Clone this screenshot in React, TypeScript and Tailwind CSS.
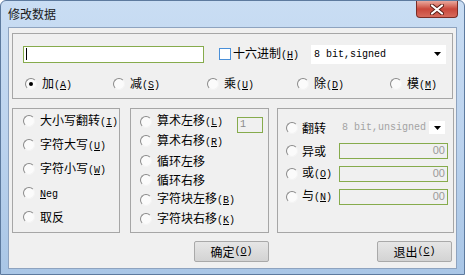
import React from "react"

const cjk = "font-['Noto_Sans_CJK_SC','Liberation_Sans',sans-serif]"
const mono = "font-['Liberation_Mono',monospace]"

// mnemonic like (A) with the letter underlined
function Key({ k }: { k: string }) {
  return (
    <span className={`${mono} text-[10px]`}>
      (<span className="underline underline-offset-[1px]">{k}</span>)
    </span>
  )
}

function Radio({ checked }: { checked?: boolean }) {
  return (
    <span className="flex h-[12px] w-[12px] shrink-0 items-center justify-center rounded-full border border-t-[#8a8a8a] border-l-[#8a8a8a] border-r-[#f4f4f4] border-b-[#f4f4f4] bg-[#fbfbfb]">
      {checked && <span className="h-[4px] w-[4px] rounded-full bg-black" />}
    </span>
  )
}

function Option({ label, k, checked, className = "" }: { label: React.ReactNode; k?: string; checked?: boolean; className?: string }) {
  return (
    <div className={`flex items-center gap-[5px] ${className}`}>
      <Radio checked={checked} />
      <span className="whitespace-nowrap text-[12px] leading-[14px] text-black">
        {label}
        {k && <Key k={k} />}
      </span>
    </div>
  )
}

function Field({ value }: { value: string }) {
  return (
    <div className="flex h-[16px] w-[109px] items-center justify-end border border-[#86ab4c] bg-[#f0f0f0] pr-[2px] font-['Liberation_Sans',sans-serif] text-[11px] text-[#9a9a9a]">
      {value}
    </div>
  )
}

function Button({ children }: { children: React.ReactNode }) {
  return (
    <button className="flex h-[21px] w-[75px] items-center justify-center rounded-[2px] border border-[#a9a9a9] bg-gradient-to-b from-[#e6e6e6] to-[#d3d3d3] text-[12px] leading-[14px] text-black">
      {children}
    </button>
  )
}

export default function App() {
  return (
    <div className={`${cjk} flex h-[275px] w-[465px] flex-col overflow-hidden rounded-t-[6px] border border-[#5d7a9e] bg-gradient-to-b from-[#c9ddf3] via-[#bcd3ee] to-[#a9c6e6]`}>
      {/* Title bar */}
      <div className="flex h-[26px] shrink-0 items-start justify-between">
        <span className="pl-[7px] pt-[7px] text-[12px] leading-[12px] text-[#1a1a1a]">修改数据</span>
        <div className="mr-[6px] flex h-[17px] w-[42px] items-center justify-center rounded-b-[4px] border border-t-0 border-[#7a2d26] bg-gradient-to-b from-[#e9a89e] via-[#c9473b] to-[#d66a5c]">
          <svg width="14" height="11" viewBox="0 0 14 11">
            <path d="M2 1.5 L12 9.5 M12 1.5 L2 9.5" stroke="#5a1d16" strokeWidth="4" strokeLinecap="round" />
            <path d="M2 1.5 L12 9.5 M12 1.5 L2 9.5" stroke="#ffffff" strokeWidth="2.2" strokeLinecap="round" />
          </svg>
        </div>
      </div>

      {/* Client area */}
      <div className="mx-[7px] flex h-[242px] flex-col border border-[#8ea3bf] bg-[#f0f0f0] pl-[3px] pt-[5px]">
        {/* Top group */}
        <div className="flex h-[66px] w-[441px] flex-col border border-[#a6a6a6]">
          <div className="mt-[10px] flex h-[20px] items-center pl-[10px] pr-[6px]">
            <div className="flex h-[17px] w-[181px] items-center border border-[#86ab4c] bg-white pl-[2px]">
              <span className="h-[12px] w-[1px] bg-black" />
            </div>
            <span className="ml-[15px] h-[12px] w-[12px] border border-[#4a90d9] bg-white" />
            <span className="ml-[2px] whitespace-nowrap text-[12px] leading-[14px]">
              十六进制<Key k="H" />
            </span>
            <div className="ml-auto flex h-[19px] w-[135px] items-center justify-between bg-white pl-[3px] pr-[5px]">
              <span className={`${mono} text-[10px] text-black`}>8 bit,signed</span>
              <svg width="7" height="4" viewBox="0 0 7 4">
                <path d="M0 0 L7 0 L3.5 4 Z" fill="#000" />
              </svg>
            </div>
          </div>
          <div className="mt-[12px] flex h-[16px] items-center pl-[12px]">
            <Option className="w-[88px]" label="加" k="A" checked />
            <Option className="w-[94px]" label="减" k="S" />
            <Option className="w-[90px]" label="乘" k="U" />
            <Option className="w-[93px]" label="除" k="D" />
            <Option label="模" k="M" />
          </div>
        </div>

        {/* Lower groups */}
        <div className="mt-[9px] flex h-[125px]">
          <div className="flex w-[108px] flex-col border border-[#a6a6a6] pl-[10px]">
            <Option className="h-[24px]" label="大小写翻转" k="I" />
            <Option className="h-[24px]" label="字符大写" k="U" />
            <Option className="h-[24px]" label="字符小写" k="W" />
            <Option className="h-[24px]" label={<span className={`${mono} text-[10px]`}><span className="underline underline-offset-[1px]">N</span>eg</span>} />
            <Option className="h-[24px]" label="取反" />
          </div>

          <div className="ml-[10px] flex w-[139px] flex-col border border-[#a6a6a6] pl-[9px] pt-[3px]">
            <div className="flex h-[19.5px] items-center">
              <Option label="算术左移" k="L" />
              <div className={`${mono} ml-auto mr-[5px] mt-[6px] flex h-[16px] w-[26px] items-center border border-[#86ab4c] bg-[#f0f0f0] pl-[2px] text-[10px] text-[#8a8a8a]`}>
                1
              </div>
            </div>
            <Option className="h-[19.5px]" label="算术右移" k="R" />
            <Option className="h-[19.5px]" label="循环左移" />
            <Option className="h-[19.5px]" label="循环右移" />
            <Option className="h-[19.5px]" label="字符块左移" k="B" />
            <Option className="h-[19.5px]" label="字符块右移" k="K" />
          </div>

          <div className="ml-[8px] flex w-[177px] flex-col border border-[#a6a6a6] pl-[8px] pt-[7px]">
            <div className="flex h-[23px] items-center">
              <Radio />
              <span className="ml-[4px] w-[37px] text-[12px] leading-[14px]">翻转</span>
              <div className="flex h-[13px] w-[106px] items-center justify-between pl-[3px]">
                <span className={`${mono} text-[10px] text-[#a3a3a3]`}>8 bit,unsigned</span>
                <span className="flex h-[13px] w-[16px] items-center justify-center bg-white">
                  <svg width="7" height="4" viewBox="0 0 7 4">
                    <path d="M0 0 L7 0 L3.5 4 Z" fill="#000" />
                  </svg>
                </span>
              </div>
            </div>
            <div className="flex h-[23px] items-center">
              <Radio />
              <span className="ml-[4px] w-[37px] text-[12px] leading-[14px]">异或</span>
              <Field value="00" />
            </div>
            <div className="flex h-[23px] items-center">
              <Radio />
              <span className="ml-[4px] w-[37px] whitespace-nowrap text-[12px] leading-[14px]">
                或<Key k="O" />
              </span>
              <Field value="00" />
            </div>
            <div className="flex h-[23px] items-center">
              <Radio />
              <span className="ml-[4px] w-[37px] whitespace-nowrap text-[12px] leading-[14px]">
                与<Key k="N" />
              </span>
              <Field value="00" />
            </div>
          </div>
        </div>

        {/* Buttons */}
        <div className="mt-[8px] flex">
          <div className="ml-[182px]">
            <Button>
              确定<Key k="O" />
            </Button>
          </div>
          <div className="ml-[108px]">
            <Button>
              退出<Key k="C" />
            </Button>
          </div>
        </div>
      </div>
    </div>
  )
}
